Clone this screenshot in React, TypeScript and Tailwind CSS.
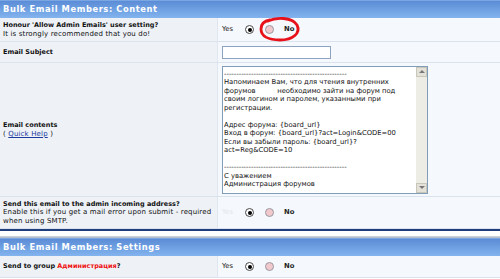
import React from 'react';

const font = { fontFamily: '"DejaVu Sans", Verdana, sans-serif' };

function Radio({ checked }: { checked?: boolean }) {
  if (checked) {
    return (
      <span className="w-[9px] h-[9px] rounded-full border border-[#4a4a4a] bg-white flex items-center justify-center">
        <span className="w-[4px] h-[4px] rounded-full bg-black" />
      </span>
    );
  }
  return <span className="w-[9px] h-[9px] rounded-full border border-[#9a9aa2] bg-[#f1c9cc]" />;
}

function YesNo({ fadedYes }: { fadedYes?: boolean }) {
  return (
    <div className="flex items-center pl-[3px] text-[6.8px]">
      <span className={fadedYes ? 'text-[#e2e7ee] w-[23px]' : 'text-[#222] w-[23px]'}>Yes</span>
      <span className="w-[20px] flex"><Radio checked /></span>
      <span className="w-[19px] flex"><Radio /></span>
      <span className="font-bold text-[#222]">No</span>
    </div>
  );
}

function Header({ title }: { title: string }) {
  return (
    <div className="h-[18px] flex items-center px-[3px] bg-gradient-to-b from-[#5b8cd6] to-[#83b4ee] border-t border-[#7aa6e4]">
      <span className="text-white font-bold text-[8.3px] tracking-[0.6px]">{title}</span>
    </div>
  );
}

function Row({ left, right, h }: { left: React.ReactNode; right: React.ReactNode; h: string }) {
  return (
    <div className={`grid grid-cols-[218px_1fr] border-b border-[#d9e2ed] ${h}`}>
      <div className="bg-[#eef2f7] border-r border-[#dfe6ef] flex flex-col justify-center px-[3px] text-[7px] tracking-[0.15px] leading-[8.5px] text-[#111]">
        {left}
      </div>
      <div className="bg-[#f5f8fc] flex items-center pl-[1px]">{right}</div>
    </div>
  );
}

const dashes = '--------------------------------------------------';

const body = `${dashes}
Напоминаем Вам, что для чтения внутренних
форумов          необходимо зайти на форум под
своим логином и паролем, указанными при
регистрации.

Адрес форума: {board_url}
Вход в форум: {board_url}?act=Login&CODE=00
Если вы забыли пароль: {board_url}?
act=Reg&CODE=10

${dashes}
С уважением
Администрация форумов`;

export default function App() {
  return (
    <div className="w-[500px] h-[279px] overflow-hidden bg-white relative" style={font}>
      <Header title="Bulk Email Members: Content" />

      <Row
        h="h-[24px]"
        left={
          <>
            <span className="font-bold text-[6.5px] tracking-normal">Honour 'Allow Admin Emails' user setting?</span>
            <span>It is strongly recommended that you do!</span>
          </>
        }
        right={<YesNo />}
      />

      <Row
        h="h-[21px]"
        left={<span className="font-bold text-[6.5px] tracking-normal">Email Subject</span>}
        right={<div className="ml-[3px] w-[109px] h-[13px] bg-white border border-[#8ea3c2]" />}
      />

      <Row
        h="h-[134px]"
        left={
          <>
            <span className="font-bold text-[6.5px] tracking-normal">Email contents</span>
            <span>
              ( <span className="text-[#1a3a9c] underline">Quick Help</span> )
            </span>
          </>
        }
        right={
          <div className="ml-[3px] w-[206px] h-[128px] bg-white border border-[#7f9db9] flex">
            <div className="flex-1 pl-[1px] pt-[3px] text-[6.8px] leading-[8.5px] text-[#111] whitespace-pre overflow-hidden">
              {body}
            </div>
            <div className="w-[11px] bg-[#eeede5] flex flex-col justify-between">
              <div className="h-[10px] bg-[#e4e2d8] border border-[#c9c6ba] flex items-center justify-center">
                <span className="w-0 h-0 border-l-[3px] border-r-[3px] border-b-[3px] border-l-transparent border-r-transparent border-b-[#777]" />
              </div>
              <div className="h-[10px] bg-[#e4e2d8] border border-[#c9c6ba] flex items-center justify-center">
                <span className="w-0 h-0 border-l-[3px] border-r-[3px] border-t-[3px] border-l-transparent border-r-transparent border-t-[#777]" />
              </div>
            </div>
          </div>
        }
      />

      <Row
        h="h-[32px]"
        left={
          <>
            <span className="font-bold text-[6.5px] tracking-normal">Send this email to the admin incoming address?</span>
            <span>Enable this if you get a mail error upon submit - required</span>
            <span>when using SMTP.</span>
          </>
        }
        right={<YesNo fadedYes />}
      />

      <div className="h-[2px] bg-[#1d3d7c]" />
      <div className="h-[5px] bg-white" />
      <div className="h-[2px] bg-gradient-to-b from-[#d6d9de] to-[#a9b6c8]" />

      <Header title="Bulk Email Members: Settings" />

      <Row
        h="h-[22px]"
        left={
          <span className="font-bold text-[6.5px] tracking-normal">
            Send to group <span className="text-[#ee1111]">Администрация</span>?
          </span>
        }
        right={<YesNo />}
      />

      <svg className="absolute left-0 top-0 pointer-events-none" width="500" height="279">
        <path
          d="M268 21 C276 17 292 17 297 25 C301 33 293 40 280 40 C268 40 261 36 261 29 C261 24 264 21 270 20"
          fill="none"
          stroke="#e8121a"
          strokeWidth="2.8"
          strokeLinecap="round"
        />
      </svg>
    </div>
  );
}
